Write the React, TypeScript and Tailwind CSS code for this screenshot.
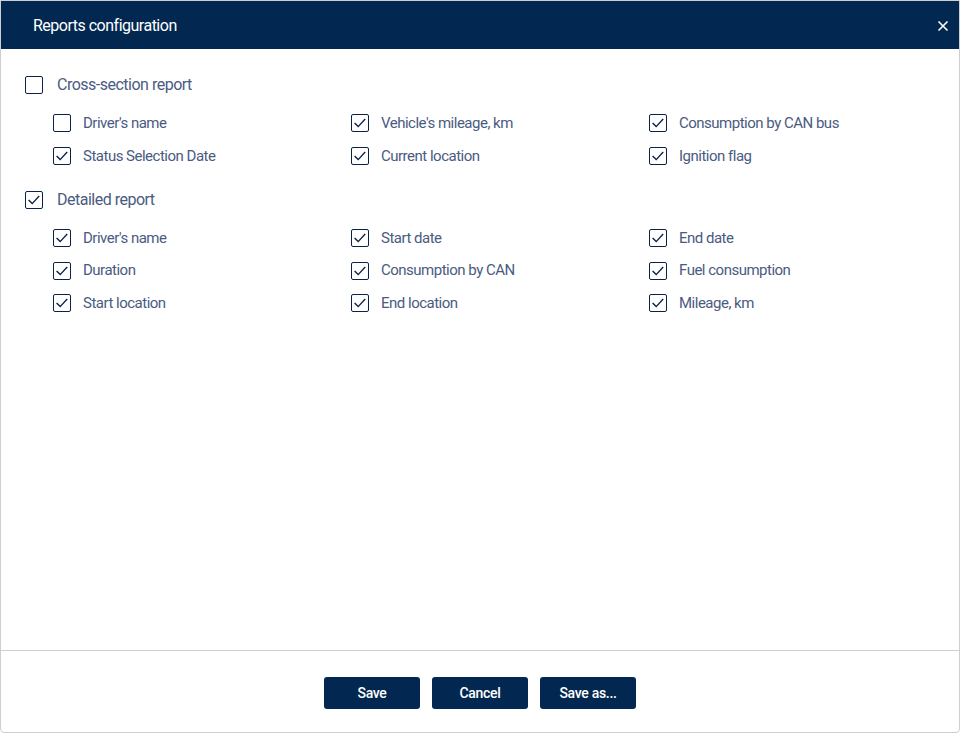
import React, { useState } from "react";

type Item = { label: string; checked: boolean };

const crossItems: Item[] = [
  { label: "Driver's name", checked: false },
  { label: "Vehicle's mileage, km", checked: true },
  { label: "Consumption by CAN bus", checked: true },
  { label: "Status Selection Date", checked: true },
  { label: "Current location", checked: true },
  { label: "Ignition flag", checked: true },
];

const detailedItems: Item[] = [
  { label: "Driver's name", checked: true },
  { label: "Start date", checked: true },
  { label: "End date", checked: true },
  { label: "Duration", checked: true },
  { label: "Consumption by CAN", checked: true },
  { label: "Fuel consumption", checked: true },
  { label: "Start location", checked: true },
  { label: "End location", checked: true },
  { label: "Mileage, km", checked: true },
];

function Box({ checked }: { checked: boolean }) {
  return (
    <span className="flex h-[18px] w-[18px] shrink-0 items-center justify-center rounded-[2px] border-[1.5px] border-[#0b2247] bg-white">
      {checked && (
        <svg width="16" height="16" viewBox="0 0 16 16" fill="none">
          <path d="M2.6 8 L6.2 11.6 L13.2 4" stroke="#0b2247" strokeWidth="1.4" />
        </svg>
      )}
    </span>
  );
}

function Check({ label, checked, onToggle, big }: { label: string; checked: boolean; onToggle: () => void; big?: boolean }) {
  return (
    <label onClick={onToggle} className={big ? "flex h-5 cursor-pointer items-center gap-[14px] select-none" : "flex h-5 cursor-pointer items-center gap-3 select-none"}>
      <Box checked={checked} />
      <span className={big ? "text-[16px] tracking-[-0.5px] text-[#4a5b82]" : "text-[15px] tracking-[-0.5px] text-[#4a5b82]"}>{label}</span>
    </label>
  );
}

function Section({ title, initial, items, rowGap }: { title: string; initial: boolean; items: Item[]; rowGap: string }) {
  const [on, setOn] = useState(initial);
  const [vals, setVals] = useState(items.map((i) => i.checked));
  return (
    <div className="flex flex-col">
      <Check label={title} checked={on} onToggle={() => setOn(!on)} big />
      <div className={"mt-[18px] grid grid-cols-[298px_298px_298px] pl-7 " + rowGap}>
        {items.map((it, idx) => (
          <Check
            key={it.label + idx}
            label={it.label}
            checked={vals[idx]}
            onToggle={() => setVals(vals.map((v, j) => (j === idx ? !v : v)))}
          />
        ))}
      </div>
    </div>
  );
}

export default function App() {
  return (
    <div className="h-[734px] w-[961px] bg-white" style={{ fontFamily: "Roboto, 'Liberation Sans', sans-serif" }}>
      <div className="flex h-[733px] w-[960px] flex-col overflow-hidden rounded-b-[4px] border border-[#cfcfcf]">
        <div className="flex h-[48px] shrink-0 items-center justify-between bg-[#022851] pl-8 pr-1 pt-[2px]">
          <span className="text-[16px] tracking-[-0.5px] text-white">Reports configuration</span>
          <button className="flex h-6 w-6 items-center justify-center">
            <svg width="12" height="12" viewBox="0 0 12 12">
              <path d="M1.5 1.5 L10.5 10.5 M10.5 1.5 L1.5 10.5" stroke="white" strokeWidth="1.6" />
            </svg>
          </button>
        </div>
        <div className="flex flex-1 flex-col gap-[24px] pl-6 pt-[26px]">
          <Section title="Cross-section report" initial={false} items={crossItems} rowGap="gap-y-[13px]" />
          <Section title="Detailed report" initial={true} items={detailedItems} rowGap="gap-y-[12.5px]" />
        </div>
        <div className="flex h-[82px] shrink-0 justify-center gap-3 border-t border-[#cfcfcf] pt-[26px]">
          {["Save", "Cancel", "Save as..."].map((b) => (
            <button key={b} className="h-8 w-24 rounded-[3px] bg-[#022851] text-[14px] font-medium tracking-[-0.3px] text-white">
              {b}
            </button>
          ))}
        </div>
      </div>
    </div>
  );
}
